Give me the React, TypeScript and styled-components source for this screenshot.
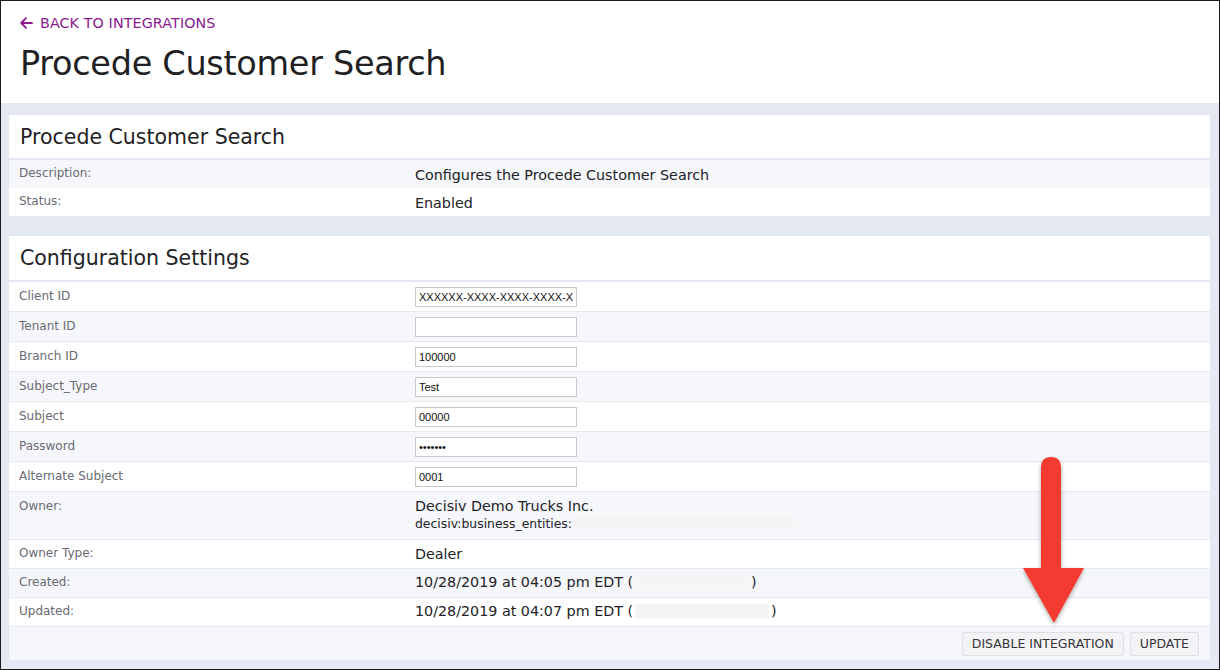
import React from "react";
import styled, { createGlobalStyle } from "styled-components";

const GlobalStyle = createGlobalStyle`
  html, body {
    margin: 0;
    padding: 0;
    background: #ffffff;
  }
  * {
    box-sizing: border-box;
  }
  body {
    font-family: "DejaVu Sans", "Open Sans", sans-serif;
    color: #222226;
  }
`;

const Frame = styled.div`
  position: relative;
  width: 1220px;
  height: 670px;
  border: 1px solid #1c1c1c;
  display: flex;
  flex-direction: column;
  overflow: hidden;
`;

const PageHeader = styled.header`
  background: #ffffff;
  height: 102px;
  padding: 13px 19px 0;
  display: flex;
  flex-direction: column;
`;

const BackLink = styled.a`
  display: flex;
  align-items: center;
  gap: 7px;
  color: #8b1a8f;
  font-size: 14.3px;
  letter-spacing: 0.1px;
  text-decoration: none;
  text-transform: uppercase;
  height: 18px;
`;

const PageTitle = styled.h1`
  margin: 12px 0 0;
  font-size: 33.5px;
  font-weight: 400;
  color: #1f1f24;
  letter-spacing: -0.3px;
`;

const Main = styled.main`
  flex: 1;
  background: #e4e8f2;
  padding: 12px 9px 8px 8px;
  display: flex;
  flex-direction: column;
  gap: 20px;
`;

const Card = styled.section`
  background: #ffffff;
  display: flex;
  flex-direction: column;
`;

const CardHeader = styled.h2<{ $h: number }>`
  margin: 0;
  height: ${(p) => p.$h}px;
  display: flex;
  align-items: center;
  padding: 0 11px;
  font-size: 20.5px;
  font-weight: 400;
  color: #222226;
  border-bottom: 2px solid #e4e8f2;
`;

const Row = styled.div<{ $alt?: boolean; $h: number; $divider?: boolean }>`
  display: grid;
  grid-template-columns: 396px 1fr;
  min-height: ${(p) => p.$h}px;
  background: ${(p) => (p.$alt ? "#f6f7fb" : "#ffffff")};
  border-bottom: ${(p) => (p.$divider ? "1px solid #e4e8f2" : "none")};
  padding-left: 10px;
`;

const Label = styled.div<{ $top: number }>`
  font-size: 12px;
  color: #6a6a72;
  padding-top: ${(p) => p.$top}px;
`;

const Value = styled.div<{ $top: number }>`
  font-size: 14.3px;
  color: #222226;
  padding-top: ${(p) => p.$top}px;
  display: flex;
  flex-direction: column;
  gap: 2px;
`;

const Line = styled.div`
  display: flex;
  align-items: center;
`;

const SubLine = styled.div`
  display: flex;
  align-items: center;
  font-size: 12.4px;
  color: #222226;
`;

const Redacted = styled.span<{ $w: number }>`
  display: inline-block;
  width: ${(p) => p.$w}px;
  height: 15px;
  background: #f5f5f6;
  border-radius: 2px;
  margin: 0 2px;
`;

const Input = styled.input`
  width: 162px;
  height: 20px;
  margin-top: 5px;
  border: 1px solid #c9c9cc;
  padding: 0 3px;
  font-family: "Liberation Sans", Arial, sans-serif;
  font-size: 11px;
  color: #111;
  background: #fff;
  outline: none;
`;

const Footer = styled.div`
  background: #f6f7fb;
  height: 33px;
  display: flex;
  justify-content: flex-end;
  align-items: center;
  gap: 6px;
  padding-right: 11px;
`;

const Button = styled.button`
  height: 24px;
  padding: 0 9px;
  background: #f3f3f6;
  border: 1px solid #e0e0e4;
  border-radius: 2px;
  font-family: "DejaVu Sans", sans-serif;
  font-size: 12.5px;
  color: #333338;
  text-transform: uppercase;
`;

const Pointer = styled.svg`
  position: absolute;
  left: 1010px;
  top: 450px;
  overflow: visible;
`;

const info = [
  { label: "Description:", value: "Configures the Procede Customer Search" },
  { label: "Status:", value: "Enabled" },
];

const fields = [
  { label: "Client ID", value: "XXXXXX-XXXX-XXXX-XXXX-XXXXXXXXXXXX", type: "text" },
  { label: "Tenant ID", value: "", type: "text" },
  { label: "Branch ID", value: "100000", type: "text" },
  { label: "Subject_Type", value: "Test", type: "text" },
  { label: "Subject", value: "00000", type: "text" },
  { label: "Password", value: "secret1", type: "password" },
  { label: "Alternate Subject", value: "0001", type: "text" },
];

function BackArrow() {
  return (
    <svg width="13" height="12" viewBox="0 0 13 12" fill="none">
      <path
        d="M12 6H1.5M6 1.2L1.2 6L6 10.8"
        stroke="#8b1a8f"
        strokeWidth="1.8"
        strokeLinecap="round"
        strokeLinejoin="round"
      />
    </svg>
  );
}

export default function App() {
  return (
    <>
      <GlobalStyle />
      <Frame>
        <PageHeader>
          <BackLink href="#">
            <BackArrow />
            Back to Integrations
          </BackLink>
          <PageTitle>Procede Customer Search</PageTitle>
        </PageHeader>

        <Main>
          <Card>
            <CardHeader $h={45}>Procede Customer Search</CardHeader>
            {info.map((r, i) => (
              <Row key={r.label} $h={28} $alt={i % 2 === 0}>
                <Label $top={6}>{r.label}</Label>
                <Value $top={7}>{r.value}</Value>
              </Row>
            ))}
          </Card>

          <Card>
            <CardHeader $h={46}>Configuration Settings</CardHeader>
            {fields.map((f, i) => (
              <Row key={f.label} $h={30} $alt={i % 2 === 1} $divider>
                <Label $top={7}>{f.label}</Label>
                <div>
                  <Input type={f.type} defaultValue={f.value} readOnly />
                </div>
              </Row>
            ))}
            <Row $h={48} $alt $divider>
              <Label $top={7}>Owner:</Label>
              <Value $top={6}>
                <Line>Decisiv Demo Trucks Inc.</Line>
                <SubLine>
                  decisiv:business_entities:
                  <Redacted $w={224} />
                </SubLine>
              </Value>
            </Row>
            <Row $h={29} $divider>
              <Label $top={6}>Owner Type:</Label>
              <Value $top={6}>Dealer</Value>
            </Row>
            <Row $h={29} $alt $divider>
              <Label $top={6}>Created:</Label>
              <Value $top={5}>
                <Line>
                  10/28/2019 at 04:05 pm EDT (<Redacted $w={114} />)
                </Line>
              </Value>
            </Row>
            <Row $h={29} $divider>
              <Label $top={6}>Updated:</Label>
              <Value $top={5}>
                <Line>
                  10/28/2019 at 04:07 pm EDT (<Redacted $w={134} />)
                </Line>
              </Value>
            </Row>
            <Footer>
              <Button>Disable Integration</Button>
              <Button>Update</Button>
            </Footer>
          </Card>
        </Main>

        <Pointer width="80" height="180" viewBox="0 0 80 180">
          <defs>
            <filter id="shadow" x="-30%" y="-10%" width="160%" height="130%">
              <feDropShadow dx="0" dy="2" stdDeviation="2" floodColor="#000" floodOpacity="0.35" />
            </filter>
          </defs>
          <g filter="url(#shadow)">
            <path d="M30 17 Q30 6 40 6 Q50 6 50 17 L50 117 L73 117 L43 172 L12 117 L30 117 Z" fill="#f43b30" />
          </g>
        </Pointer>
      </Frame>
    </>
  );
}
